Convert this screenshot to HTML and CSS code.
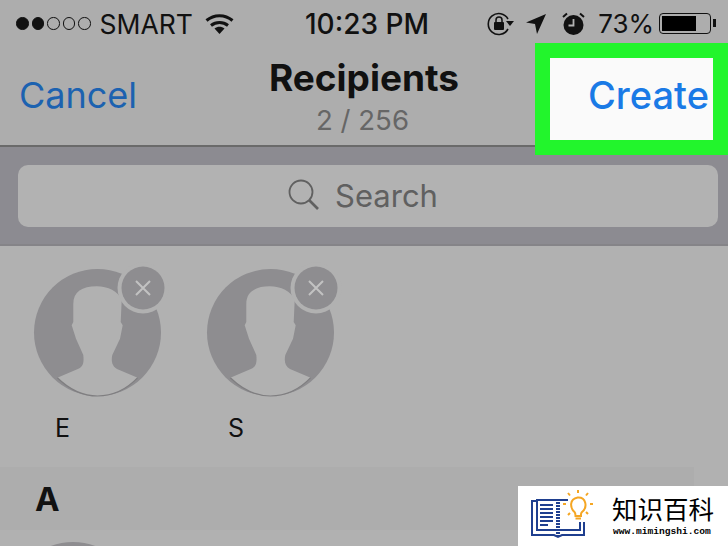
FILE: index.html
```html
<!DOCTYPE html>
<html lang="en">
<head>
  <meta charset="UTF-8" />
  <title>Recipients</title>
  <link rel="stylesheet" href="styles.css">
</head>
<body>
  <svg class="defs" width="0" height="0">
    <symbol id="avatar" viewBox="0 0 134 130" overflow="visible">
      <circle cx="63.5" cy="66.5" r="63.5" fill="#8e8d90"/>
      <path fill="#b1b1b1" d="M62.700 20.300C48 20.300 39.300 26 39.300 38L39.300 56L37.700 59.300L42 72.700L49.300 89C50 96 49.500 100 45 102.500L23.300 111.700C36 124 49 130 63.500 130C78 130 92 124 103.700 111.700L83 103C78 100 77 95 78.300 89L86 72.700L88.700 59.300L86.700 56L87.700 34C84 25 74 20.300 62.700 20.300Z"/>
      <path fill="none" stroke="#7f7e80" stroke-width="1.200" d="M23.300 111.700C36 124 49 130 63.500 130C78 130 92 124 103.700 111.700"/>
      <circle cx="109" cy="22" r="25.500" fill="#b1b1b1"/>
      <circle cx="109" cy="22" r="21.500" fill="#8e8d90"/>
      <path stroke="#c2c2c2" stroke-width="2" d="M102 15L116 29M116 15L102 29"/>
    </symbol>
  </svg>

  <header class="status-bar">
    <div class="status-left">
      <span class="signal">
        <i class="dot on"></i><i class="dot on"></i><i class="dot"></i><i class="dot"></i><i class="dot"></i>
      </span>
      <span class="carrier">SMART</span>
      <svg class="wifi" width="29" height="22" viewBox="0 0 29 22">
        <path fill="none" stroke="#111" stroke-width="3" d="M1.500 7.500C9 1 20 1 27.500 7.500M6 12.500C11 8.500 18 8.500 23 12.500"/>
        <path fill="#111" d="M9.500 15.500C12.500 13 16.500 13 19.500 15.500L14.500 21Z"/>
      </svg>
    </div>
    <div class="time">10:23 PM</div>
    <div class="status-right">
      <svg width="27" height="24" viewBox="0 0 27 24">
        <path fill="none" stroke="#111" stroke-width="1.600" d="M21 17A10.500 10.500 0 1 1 21 7"/>
        <path fill="#111" d="M19 9L27 9L23 14Z"/>
        <rect x="7" y="10" width="10" height="8" rx="1" fill="#111"/>
        <path fill="none" stroke="#111" stroke-width="1.500" d="M9 10V8A3 3 0 0 1 15 8V10"/>
      </svg>
      <svg class="arrow" width="20" height="20" viewBox="0 0 20 20">
        <path fill="#111" d="M20 0L0 8.500L9 10L11 20Z"/>
      </svg>
      <svg class="alarm" width="23" height="24" viewBox="0 0 23 24">
        <circle cx="11.500" cy="13" r="10" fill="#111"/>
        <path fill="none" stroke="#b1b1b1" stroke-width="1.800" d="M11.500 7V13.500H6.500"/>
        <path fill="none" stroke="#111" stroke-width="2" d="M1 5L5 1.500M22 5L18 1.500"/>
      </svg>
      <span class="battery-pct">73%</span>
      <span class="battery"><span class="battery-fill"></span></span>
    </div>
  </header>

  <nav class="nav-bar">
    <a class="cancel">Cancel</a>
    <div class="title-block">
      <div class="title">Recipients</div>
      <div class="count">2 / 256</div>
    </div>
  </nav>

  <section class="search-band">
    <div class="search-field">
      <svg width="32" height="32" viewBox="0 0 32 32">
        <circle cx="13" cy="13" r="11.500" fill="none" stroke="#606060" stroke-width="1.800"/>
        <path stroke="#606060" stroke-width="2.600" d="M21 21L30 30"/>
      </svg>
      <span>Search</span>
    </div>
  </section>

  <section class="contacts">
    <div class="contact">
      <svg class="avatar" width="134" height="130"><use href="#avatar"/></svg>
      <div class="contact-name">E</div>
    </div>
    <div class="contact">
      <svg class="avatar" width="134" height="130"><use href="#avatar"/></svg>
      <div class="contact-name">S</div>
    </div>
  </section>

  <section class="letter-row">
    <div class="letter">A</div>
  </section>
  <div class="list-row"><span class="list-avatar"></span></div>

  <div class="highlight"><span>Create</span></div>

  <div class="watermark">
    <svg class="watermark-logo" width="64" height="46" viewBox="0 0 64 46">
      <path fill="none" stroke="#1f3f8f" stroke-width="2" d="M6 7H0V41H22L26 43L30 41H52V28"/>
      <path fill="none" stroke="#1f3f8f" stroke-width="2" d="M25 6H5V36H25M27 6H36M27 36H48V28"/>
      <path stroke="#1f3f8f" stroke-width="2" d="M8 11H21M8 15H21M8 19H21M8 23H21M8 27H21M8 31H16"/>
      <path stroke="#1f3f8f" stroke-width="4" stroke-dasharray="2 1" d="M26 5V42"/>
      <path fill="#fff" stroke="#f5a623" stroke-width="2" d="M42.500 18C38 14 37 5 45.700 3.500C54 3 56 13 50 18C48.500 19.500 49 20 49 22H43.500C43.500 20 43.500 19 42.500 18Z"/>
      <path fill="none" stroke="#f5a623" stroke-width="2" d="M43.500 24.500H49M46 -4V-1M36 -1L38 1.500M56 -1L54 1.500M31 10H34M61 10H58M36 21L38 19M56 20L54 18"/>
    </svg>
    <div class="watermark-text">
      <div class="watermark-name">知识百科</div>
      <div class="watermark-url">www.mimingshi.com</div>
    </div>
  </div>
</body>
</html>
```

FILE: styles.css
```css
* {
  margin: 0;
  padding: 0;
  box-sizing: border-box;
}
html, body {
  width: 728px;
  height: 546px;
  overflow: hidden;
}
body {
  position: relative;
  font-family: 'Inter', 'Liberation Sans', sans-serif;
  background: #b1b1b1;
  color: #111;
}
.defs {
  position: absolute;
}
.status-bar {
  height: 45px;
  padding: 2px 17px 0 16px;
  display: grid;
  grid-template-columns: 1fr auto 1fr;
  align-items: center;
  background: #adadad;
  font-size: 26px;
}
.status-left, .status-right {
  display: flex;
  align-items: center;
}
.status-right {
  justify-content: flex-end;
  gap: 14px;
}
.signal {
  display: flex;
  gap: 3px;
}
.dot {
  width: 12.500px;
  height: 12.500px;
  border: 1px solid #111;
  border-radius: 50%;
}
.dot.on {
  background: #111;
}
.carrier {
  margin-left: 9px;
  font-size: 26.500px;
}
.wifi {
  margin-left: 12px;
}
.time {
  margin-left: 7px;
  font-size: 28px;
  font-weight: 500;
}
.arrow {
  margin: 0 2px 0 -2px;
}
.battery-pct {
  margin: 0 -9px 0 -1px;
}
.battery {
  position: relative;
  width: 52px;
  height: 21px;
  padding: 2px;
  border: 1.500px solid #111;
  border-radius: 4px;
}
.battery::after {
  content: '';
  position: absolute;
  right: -6px;
  top: 5px;
  width: 3px;
  height: 8px;
  background: #111;
}
.battery-fill {
  display: block;
  width: 73%;
  height: 100%;
  background: #000;
}
.nav-bar {
  position: relative;
  height: 102px;
  padding: 10px 19px 0;
  display: flex;
  align-items: center;
  background: #adadad;
  border-bottom: 2px solid #6a6a6a;
}
.cancel {
  font-size: 36px;
  color: #1c62b0;
  margin-top: -10px;
}
.title-block {
  position: absolute;
  left: 0;
  right: 0;
  top: 12px;
  text-align: center;
}
.title {
  font-size: 37px;
  font-weight: 700;
  line-height: 42px;
}
.count {
  margin-top: 3px;
  padding-right: 3px;
  font-size: 27.600px;
  line-height: 36px;
  color: #666;
}
.search-band {
  height: 99px;
  padding: 18px 0 18px 18px;
  background: #8c8b91;
  border-bottom: 2px solid #858488;
}
.search-field {
  height: 62px;
  margin-right: 10px;
  padding: 0 10px 2px 0;
  display: flex;
  align-items: center;
  justify-content: center;
  gap: 15px;
  background: #b2b2b2;
  border-radius: 10px;
  font-size: 31px;
  color: #606060;
}
.contacts {
  height: 221px;
  padding: 20px 0 0 34px;
  display: flex;
  background: #b1b1b1;
}
.contact {
  width: 173px;
}
.avatar {
  display: block;
  overflow: visible;
}
.contact-name {
  margin: 16px 0 0 21px;
  font-size: 25px;
  line-height: 32px;
}
.letter-row {
  width: 694px;
  height: 63px;
  padding-left: 35px;
  display: flex;
  align-items: center;
  background: #adadad;
}
.letter {
  font-size: 33px;
  font-weight: 700;
}
.list-row {
  height: 17px;
  padding: 12px 0 0 9px;
  overflow: hidden;
}
.list-avatar {
  display: block;
  width: 128px;
  height: 128px;
  border-radius: 50%;
  background: #8e8d90;
}
.highlight {
  position: absolute;
  left: 535px;
  top: 43px;
  width: 193px;
  height: 112px;
  padding: 0 0 8px 38px;
  display: flex;
  align-items: center;
  background: #fafafa;
  border: 15px solid #22f52c;
  font-size: 38px;
  font-weight: 500;
  color: #1a7ae6;
}
.watermark {
  position: absolute;
  left: 518px;
  top: 486px;
  width: 210px;
  height: 60px;
  padding: 7px 0 0 14px;
  display: flex;
  gap: 16px;
  background: #fff;
  color: #000;
}
.watermark-logo {
  overflow: visible;
  margin-top: 1px;
}
.watermark-name {
  font-family: 'Noto Sans CJK SC', sans-serif;
  font-size: 25.500px;
  line-height: 30px;
}
.watermark-url {
  margin: 2px 0 0 1px;
  font-family: 'Liberation Mono', monospace;
  font-size: 9.600px;
  font-weight: 700;
  line-height: 14px;
}
```
